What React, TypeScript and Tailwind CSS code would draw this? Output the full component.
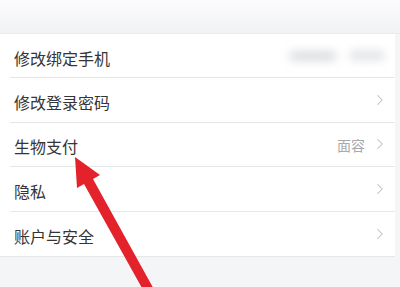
import { ChevronRight } from 'lucide-react'

type Row = {
  label: string
  value?: string
  blurred?: boolean
  chevron?: boolean
}

const rows: Row[] = [
  { label: '修改绑定手机', blurred: true },
  { label: '修改登录密码', chevron: true },
  { label: '生物支付', value: '面容', chevron: true },
  { label: '隐私', chevron: true },
  { label: '账户与安全', chevron: true },
]

export default function App() {
  return (
    <div
      className="relative w-[400px] h-[287px] overflow-hidden bg-[#f4f5f7]"
      style={{ fontFamily: '"Noto Sans CJK SC", "Noto Sans", sans-serif' }}
    >
      {/* top strip */}
      <div className="h-[34px] bg-gradient-to-b from-[#fbfbfc] to-[#f1f2f4] border-b border-[#e9eaec]" />

      <div className="bg-white mr-[5px] border-b border-[#e6e7e9]">
        {rows.map((row, i) => (
          <div key={row.label} className="pl-2.5">
            <div
              className={`h-[44.4px] flex items-center pr-1.5 ${
                i < rows.length - 1 ? 'border-b border-[#e6e7e9]' : ''
              }`}
            >
              <span className="pl-1 pt-1 text-[16px] text-[#353535] leading-none">{row.label}</span>
              <div className="ml-auto flex items-center gap-1">
                {row.blurred && (
                  <div className="flex items-center gap-3 blur-[5px] mr-1">
                    <div className="w-[48px] h-[10px] rounded-full bg-[#dcdde0]" />
                    <div className="w-[36px] h-[9px] rounded-full bg-[#e0e1e3]" />
                  </div>
                )}
                {row.value && (
                  <span className="text-[14px] text-[#a9a9ab] leading-none pt-0.5 mr-0.5">{row.value}</span>
                )}
                {row.chevron && <ChevronRight size={18} strokeWidth={1.4} className="text-[#bdbdc0]" />}
              </div>
            </div>
          </div>
        ))}
      </div>

      {/* red annotation arrow */}
      <svg className="absolute inset-0 pointer-events-none" width="400" height="287" viewBox="0 0 400 287">
        <polygon
          points="75,157 100,175 93,179 156,293 147,297 84,184 77,188"
          fill="#e3222b"
        />
      </svg>
    </div>
  )
}
